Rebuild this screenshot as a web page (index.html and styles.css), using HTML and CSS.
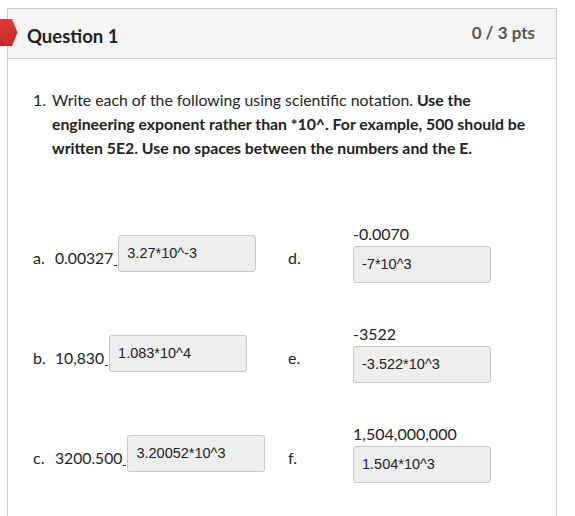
FILE: index.html
```html
<!DOCTYPE html>
<html>
<head>
<meta charset="utf-8">
<link rel="stylesheet" href="styles.css">
</head>
<body>
<div class="question">
  <svg class="flag" width="18" height="27" viewBox="0 0 18 27">
    <defs>
      <linearGradient id="fg" x1="0" y1="0" x2="0" y2="1">
        <stop offset="0" stop-color="#e03a36"/>
        <stop offset="1" stop-color="#c42a27"/>
      </linearGradient>
    </defs>
    <polygon points="0,0 12,0 17.5,13.5 12,27 0,27" fill="url(#fg)"/>
  </svg>
  <div class="header">
    <div class="title">Question 1</div>
    <div class="pts">0 / 3 pts</div>
  </div>
  <div class="body">
    <div class="item">
      <span class="num">1.</span>
      <p class="text">Write each of the following using scientific notation. <b>Use the engineering exponent rather than *10^. For example, 500 should be written 5E2. Use no spaces between the numbers and the E.</b></p>
    </div>
    <div class="rows">
      <div class="row">
        <div class="left">
          <span class="lbl">a.</span><span class="val">0.00327</span><span class="blank"></span><span class="box">3.27*10^-3</span>
        </div>
        <div class="mid"><span class="lbl2">d.</span></div>
        <div class="right">
          <span class="val2">-0.0070</span>
          <span class="box">-7*10^3</span>
        </div>
      </div>
      <div class="row">
        <div class="left">
          <span class="lbl">b.</span><span class="val">10,830</span><span class="blank"></span><span class="box">1.083*10^4</span>
        </div>
        <div class="mid"><span class="lbl2">e.</span></div>
        <div class="right">
          <span class="val2">-3522</span>
          <span class="box">-3.522*10^3</span>
        </div>
      </div>
      <div class="row">
        <div class="left">
          <span class="lbl">c.</span><span class="val">3200.500</span><span class="blank"></span><span class="box">3.20052*10^3</span>
        </div>
        <div class="mid"><span class="lbl2">f.</span></div>
        <div class="right">
          <span class="val2">1,504,000,000</span>
          <span class="box">1.504*10^3</span>
        </div>
      </div>
    </div>
  </div>
</div>
</body>
</html>
```
FILE: styles.css
```css
html, body {
  margin: 0;
  padding: 0;
  background: #ffffff;
}
body {
  font-family: Lato, "Liberation Sans", sans-serif;
  color: #222222;
  height: 516px;
  overflow: hidden;
}
.question {
  margin: 8px 0 0 7px;
  width: 548px;
  border: 1px solid #c7cdd1;
  border-bottom: none;
  height: 507px;
  overflow: hidden;
}
.flag {
  position: absolute;
  left: 0;
  top: 19px;
}
.header {
  height: 49px;
  background: #f5f5f5;
  border-bottom: 1px solid #c7cdd1;
  display: flex;
  justify-content: space-between;
  align-items: center;
  padding: 0 21px 0 19px;
}
.title {
  font-weight: 700;
  font-size: 18.5px;
  margin-top: 5px;
}
.pts {
  font-weight: 700;
  font-size: 17px;
  color: #555555;
  margin-top: -2px;
}
.body {
  padding: 29px 0 0 25px;
}
.item {
  display: flex;
}
.num {
  width: 19px;
  font-size: 16px;
  line-height: 24px;
  flex: none;
}
.text {
  margin: 0;
  font-size: 15.8px;
  line-height: 24px;
  width: 490px;
}
.rows {
  margin-top: 64px;
  display: flex;
  flex-direction: column;
  gap: 41px;
}
.row {
  display: grid;
  grid-template-columns: 255px 65px auto;
}
.left {
  display: flex;
  align-items: center;
}
.lbl {
  width: 22px;
  font-size: 16px;
  line-height: 20px;
  padding-top: 9px;
}
.val {
  font-size: 15.7px;
  line-height: 20px;
  padding-top: 9px;
}
.blank {
  width: 3px;
  height: 1px;
  background: #333333;
  margin: 23px 1px 0 1px;
}
.mid {
  display: flex;
  align-items: center;
}
.lbl2 {
  font-size: 16px;
  line-height: 20px;
  padding-top: 9px;
}
.right {
  display: flex;
  flex-direction: column;
  gap: 2px;
}
.val2 {
  font-size: 16px;
  line-height: 20px;
}
.box {
  box-sizing: border-box;
  width: 138px;
  height: 37px;
  border: 1px solid #c8c8c8;
  border-radius: 3px;
  background: #eeeeee;
  font-family: "Liberation Sans", Arial, sans-serif;
  font-size: 14.5px;
  color: #222222;
  display: flex;
  align-items: center;
  padding: 0 0 1px 8px;
}
```
